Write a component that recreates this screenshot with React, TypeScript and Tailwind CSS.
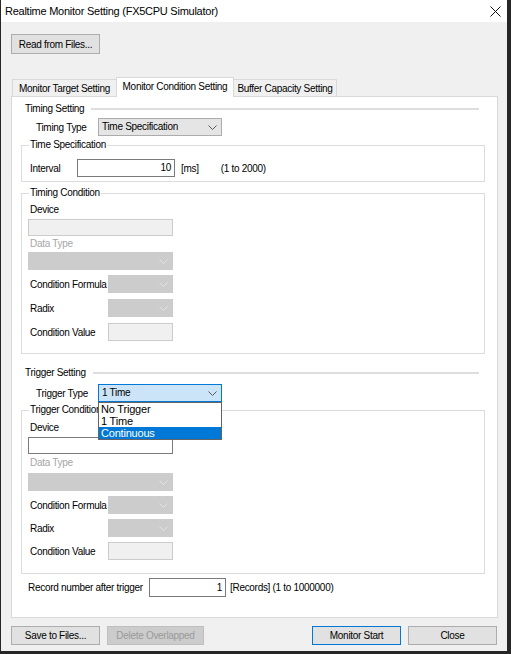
import type { ReactNode } from 'react'

const FONT = { fontFamily: '"Liberation Sans", Arial, sans-serif' }

function Chevron({ disabled }: { disabled?: boolean }) {
    return (
        <svg width="9" height="5" viewBox="0 0 9 5" fill="none" className="shrink-0">
            <path d="M0.5 0.5 L4.5 4.5 L8.5 0.5" stroke={disabled ? '#e2e2e2' : '#5a5a5a'} strokeWidth="1" />
        </svg>
    )
}

function Select({
    value,
    width,
    disabled,
    focused
}: {
    value?: string
    width: string
    disabled?: boolean
    focused?: boolean
}) {
    const cls = disabled
        ? 'bg-[#cccccc] border-[#cccccc]'
        : focused
          ? 'bg-[#cce4f7] border-[#0078d7]'
          : 'bg-[#e5e5e5] border-[#acacac]'
    return (
        <div className={`${width} h-[18px] border ${cls} flex items-center justify-between pl-[3px] pr-[4px]`}>
            <span className="leading-none">{value}</span>
            <Chevron disabled={disabled} />
        </div>
    )
}

function TextBox({
    value,
    width,
    height = 'h-[17px]',
    disabled
}: {
    value?: string
    width: string
    height?: string
    disabled?: boolean
}) {
    return (
        <div
            className={`${width} ${height} border flex items-center justify-end pr-[3px] ${
                disabled ? 'bg-[#f0f0f0] border-[#cccccc]' : 'bg-white border-[#7a7a7a]'
            }`}
        >
            <span className="leading-none">{value}</span>
        </div>
    )
}

function Button({
    children,
    width,
    disabled,
    primary
}: {
    children: ReactNode
    width: string
    disabled?: boolean
    primary?: boolean
}) {
    const cls = disabled
        ? 'bg-[#cccccc] border-[#bfbfbf] text-[#9a9a9a]'
        : primary
          ? 'bg-[#e1e1e1] border-[#0078d7] text-black'
          : 'bg-[#e1e1e1] border-[#adadad] text-black'
    return <div className={`${width} h-[19px] border ${cls} flex items-center justify-center`}>{children}</div>
}

function SectionHeader({ title }: { title: string }) {
    return (
        <div className="h-[14px] flex items-center pl-[13px] mr-[18px]">
            <span className="leading-[14px]">{title}</span>
            <div className="flex-1 h-[2px] bg-[#dedede] ml-[7px]" />
        </div>
    )
}

function ConditionFields({ deviceEnabled, compact }: { deviceEnabled?: boolean; compact?: boolean }) {
    return (
        <div className="pl-[6px]">
            <div className={`${compact ? 'mt-[4px]' : 'mt-[3px]'} h-[14px] leading-[14px] ml-[2px]`}>Device</div>
            <div className="mt-[2px]">
                <TextBox width="w-[145px]" disabled={!deviceEnabled} />
            </div>
            <div className={`${compact ? 'mt-[2px]' : 'mt-[1px]'} h-[14px] leading-[14px] ml-[2px] text-[#a6a6a6]`}>
                Data Type
            </div>
            <div className={compact ? 'mt-[3px]' : 'mt-[1px]'}>
                <Select width="w-[145px]" disabled />
            </div>
            <div className="mt-[5px] flex items-center">
                <span className="w-[80px] pl-[2px]">Condition Formula</span>
                <Select width="w-[65px]" disabled />
            </div>
            <div className={`${compact ? 'mt-[5px]' : 'mt-[6px]'} flex items-center`}>
                <span className="w-[80px] pl-[2px]">Radix</span>
                <Select width="w-[65px]" disabled />
            </div>
            <div className={`${compact ? 'mt-[5px]' : 'mt-[6px]'} flex items-center`}>
                <span className="w-[80px] pl-[2px]">Condition Value</span>
                <TextBox width="w-[65px]" height="h-[18px]" disabled />
            </div>
        </div>
    )
}

export default function App() {
    return (
        <div
            className="w-[511px] h-[654px] bg-[#262626] pl-[1px] pr-[4px] pb-[3px] text-[10px] tracking-[-0.3px] text-black"
            style={FONT}
        >
            <div className="h-full bg-[#f0f0f0] flex flex-col">
                {/* Title bar */}
                <div className="h-[22px] bg-white flex items-center justify-between pl-[4px] pr-[6px] shrink-0">
                    <span className="text-[11px] tracking-[-0.25px]">Realtime Monitor Setting (FX5CPU Simulator)</span>
                    <svg width="11" height="11" viewBox="0 0 11 11">
                        <path d="M0.5 0.5 L10.5 10.5 M10.5 0.5 L0.5 10.5" stroke="#111" strokeWidth="1" />
                    </svg>
                </div>

                <div className="pl-[10px]">
                    <div className="mt-[12px]">
                        <div className="w-[89px] h-[20px] border border-[#adadad] bg-[#e1e1e1] flex items-center justify-center">
                            Read from Files...
                        </div>
                    </div>

                    {/* Tabs */}
                    <div className="mt-[23px] h-[20px] flex items-end pl-[1px] mb-[-1px] relative z-10">
                        <div className="w-[105px] h-[18px] border border-[#d9d9d9] bg-[#f0f0f0] flex items-center justify-center">
                            Monitor Target Setting
                        </div>
                        <div className="w-[118px] h-[20px] -ml-px border border-b-0 border-[#d9d9d9] bg-white flex items-center justify-center pb-[2px]">
                            Monitor Condition Setting
                        </div>
                        <div className="w-[104px] h-[18px] -ml-px border border-[#d9d9d9] bg-[#f0f0f0] flex items-center justify-center">
                            Buffer Capacity Setting
                        </div>
                    </div>

                    {/* Tab panel */}
                    <div className="w-[487px] h-[522px] border border-[#d9d9d9] bg-white">
                        <div className="mt-[5px]">
                            <SectionHeader title="Timing Setting" />
                        </div>
                        <div className="mt-[2px] flex items-center pl-[24px]">
                            <span className="w-[62px]">Timing Type</span>
                            <Select width="w-[124px]" value="Time Specification" />
                        </div>

                        <fieldset className="mt-[2px] ml-[9px] mr-[12px] border border-[#dcdcdc] pb-[4px]">
                            <legend className="ml-[7px] px-[1px] leading-[14px]">Time Specification</legend>
                            <div className="mt-[7px] flex items-center pl-[8px]">
                                <span className="w-[47px]">Interval</span>
                                <TextBox width="w-[98px]" height="h-[18px]" value="10" />
                                <span className="ml-[6px]">[ms]</span>
                                <span className="ml-[22px]">(1 to 2000)</span>
                            </div>
                        </fieldset>

                        <fieldset className="mt-[4px] ml-[9px] mr-[12px] border border-[#dcdcdc] pb-[12px]">
                            <legend className="ml-[7px] px-[1px] leading-[14px]">Timing Condition</legend>
                            <ConditionFields />
                        </fieldset>

                        <div className="mt-[12px]">
                            <SectionHeader title="Trigger Setting" />
                        </div>
                        <div className="mt-[4px] flex items-center pl-[24px] relative z-20">
                            <span className="w-[62px]">Trigger Type</span>
                            <div className="relative">
                                <Select width="w-[124px]" value="1 Time" focused />
                                {/* Open dropdown list */}
                                <div className="absolute left-0 top-full w-[124px] border border-[#646464] bg-white text-[11px] tracking-[-0.2px]">
                                    <div className="h-[12px] leading-[12px] pl-[2px]">No Trigger</div>
                                    <div className="h-[12px] leading-[12px] pl-[2px]">1 Time</div>
                                    <div className="h-[12px] leading-[12px] pl-[2px] bg-[#0078d7] text-white">Continuous</div>
                                </div>
                            </div>
                        </div>

                        <fieldset className="mt-[1px] ml-[9px] mr-[12px] border border-[#dcdcdc] pb-[13px]">
                            <legend className="ml-[7px] px-[1px] leading-[14px]">Trigger Condition</legend>
                            <ConditionFields deviceEnabled compact />
                        </fieldset>

                        <div className="mt-[4px] flex items-center pl-[16px]">
                            <span className="w-[121px]">Record number after trigger</span>
                            <TextBox width="w-[77px]" height="h-[19px]" value="1" />
                            <span className="ml-[4px]">[Records] (1 to 1000000)</span>
                        </div>
                    </div>

                    {/* Bottom buttons */}
                    <div className="mt-[8px] flex">
                        <Button width="w-[89px]">Save to Files...</Button>
                        <div className="ml-[7px]">
                            <Button width="w-[97px]" disabled>
                                Delete Overlapped
                            </Button>
                        </div>
                        <div className="ml-[108px]">
                            <Button width="w-[89px]" primary>
                                Monitor Start
                            </Button>
                        </div>
                        <div className="ml-[7px]">
                            <Button width="w-[89px]">Close</Button>
                        </div>
                    </div>
                </div>
            </div>
        </div>
    )
}
